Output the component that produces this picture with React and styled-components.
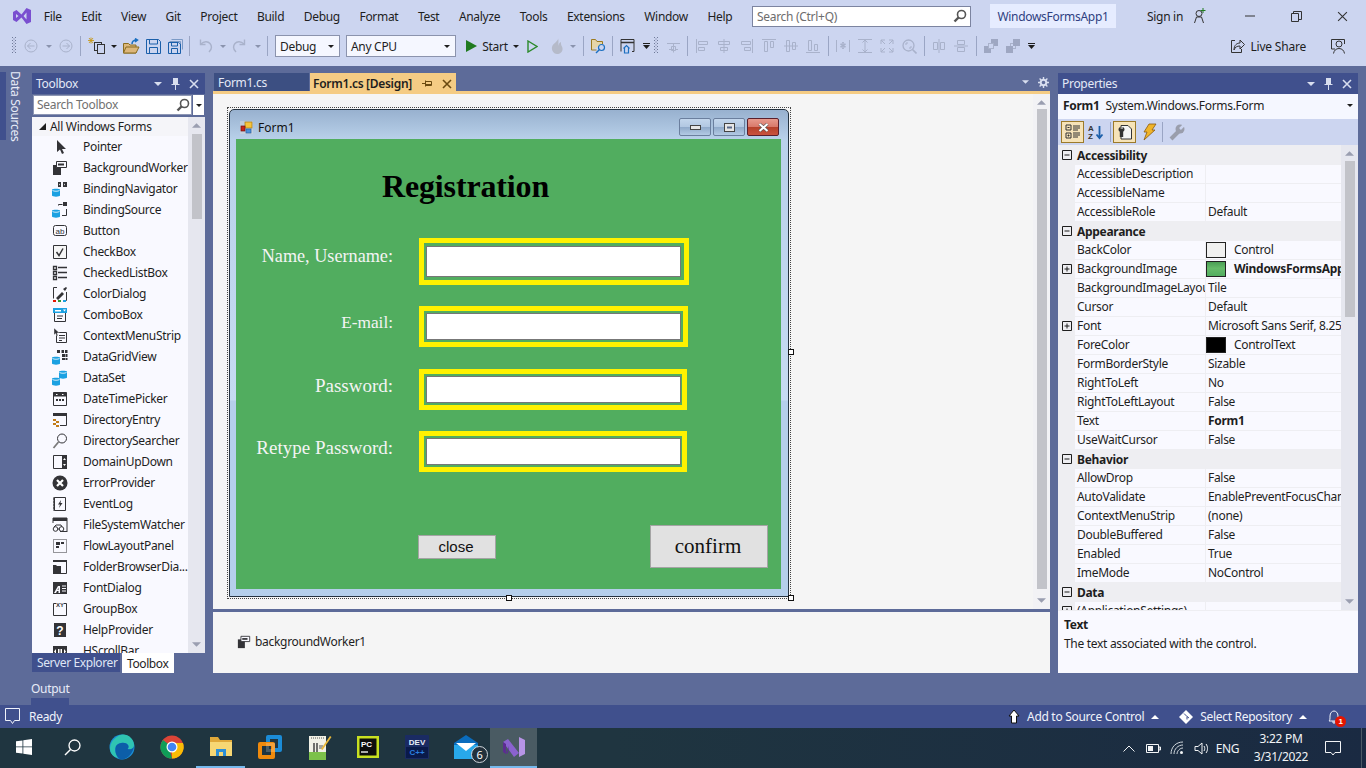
import React from 'react';
import styled, { createGlobalStyle } from 'styled-components';

const UI = '"Noto Sans", "Open Sans", sans-serif';
const SERIF = '"Liberation Serif", serif';

const GlobalStyle = createGlobalStyle`
  html, body { margin: 0; padding: 0; background: #5d6b99; }
  body { width: 1366px; height: 768px; overflow: hidden; font-family: ${UI}; font-size: 12px; letter-spacing: -0.3px; color: #1e1e1e; }
  * { box-sizing: border-box; }
  svg { display: block; flex-shrink: 0; }
  svg text { letter-spacing: 0; }
`;

const Svg = ({ s = 16, w, h, vb = '0 0 16 16', children, ...rest }) => (
  <svg width={w || s} height={h || s} viewBox={vb} {...rest}>{children}</svg>
);

const Tri = ({ color = '#d8deef', w = 7, h = 4, down = true }) => (
  <Svg w={w} h={h} vb="0 0 8 4"><path d={down ? 'M0 0h8L4 4z' : 'M0 4h8L4 0z'} fill={color} /></Svg>
);
const Cross = ({ color = '#d8deef', s = 10, sw = 1.6 }) => (
  <Svg s={s} vb="0 0 10 10"><path d="M1 1l8 8M9 1l-8 8" stroke={color} strokeWidth={sw} fill="none" /></Svg>
);
const Pin = ({ color = '#d8deef' }) => (
  <Svg w={9} h={13} vb="0 0 9 13"><path d="M2 1h5v6h1.500v1h-8V7H2zM4 8h1v5H4z" fill={color} /></Svg>
);
const Magnifier = ({ color = '#555', s = 14 }) => (
  <Svg s={s} vb="0 0 14 14"><circle cx="8.500" cy="5.500" r="4" fill="none" stroke={color} strokeWidth="1.600" /><path d="M5.500 8.500L1.500 12.500" stroke={color} strokeWidth="2.400" /></Svg>
);

const DIM = '#a9b2cb';
const Line = ({ d, c = DIM, sw = 1 }) => <path d={d} fill="none" stroke={c} strokeWidth={sw} />;

// toolbar drawings, each on a 16 box
const toolIcons = {
  grip: <Svg w={5} h={18} vb="0 0 5 18"><path d="M0 0h1v1H0zM3 0h1v1H3zM0 3h1v1H0zM3 3h1v1H3zM0 6h1v1H0zM3 6h1v1H3zM0 9h1v1H0zM3 9h1v1H3zM0 12h1v1H0zM3 12h1v1H3zM0 15h1v1H0zM3 15h1v1H3zM1.500 1.500h1v1h-1zM1.500 4.500h1v1h-1zM1.500 7.500h1v1h-1zM1.500 10.500h1v1h-1zM1.500 13.500h1v1h-1z" fill="#6f7a99" /></Svg>,
  back: <Svg s={14} vb="0 0 14 14"><circle cx="7" cy="7" r="6" fill="none" stroke={DIM} /><Line d="M10.500 7h-7M6.500 4l-3 3 3 3" /></Svg>,
  forward: <Svg s={14} vb="0 0 14 14"><circle cx="7" cy="7" r="6" fill="none" stroke={DIM} /><Line d="M3.500 7h7M7.500 4l3 3-3 3" /></Svg>,
  arrowDim: <Tri color="#8a93ad" w={6} h={3} />,
  arrow: <Tri color="#1e1e1e" w={6} h={3} />,
  sep: <Svg w={1} h={20} vb="0 0 1 20"><rect width="1" height="20" fill="#9aa5c4" /></Svg>,
  newProject: <Svg s={18} vb="0 0 18 18"><path d="M3 .500v6M0 3.500h6M1 1l4 5M5 1L1 6" stroke="#c79a1e" strokeWidth=".9" fill="none" /><rect x="6.500" y="5.500" width="7" height="8" fill="#ccd5f0" stroke="#333" /><rect x="9.500" y="7.500" width="7" height="9" fill="#ccd5f0" stroke="#333" /></Svg>,
  open: <Svg w={17} h={16} vb="0 0 17 16"><path d="M.500 15V5.500h5l1.500 1.500h6v8z" fill="#dcb67a" stroke="#8a6d1f" /><path d="M.500 15l2.500-6h13l-3 6z" fill="#dcb67a" stroke="#8a6d1f" /><path d="M9 6c0-3 2-4 5-4M12 .500l2.500 1.500L12 4" stroke="#1a6fc0" strokeWidth="1.500" fill="none" /></Svg>,
  save: <Svg s={15} vb="0 0 15 15"><path d="M.500.500h12l2 2v12H.500z" fill="#ccd5f0" stroke="#1b5faa" strokeWidth="1" /><path d="M3.500.500v4.500h8V.500M3.500 14.500V8.500h8v6" fill="none" stroke="#1b5faa" /></Svg>,
  saveAll: <Svg s={15} vb="0 0 15 15"><path d="M3.500.500h11v10M1.500 2.500h11v10" fill="none" stroke="#7b9ac6" /><path d="M.500 3.500h10l2 1.500v9.500H.500z" fill="#ccd5f0" stroke="#1b5faa" /><path d="M3.500 3.500v3.500h6v-3.500M3.500 14.500v-5h6v5" fill="none" stroke="#1b5faa" /></Svg>,
  undo: <Svg s={16}><Line d="M12 14c3-3 3-6 1-8.500S7 3 4 6" sw={1.400} /><Line d="M3.500 1.500v5h5" sw={1.400} /></Svg>,
  redo: <Svg s={16}><Line d="M4 14C1 11 1 8 3 5.500S9 3 12 6" sw={1.400} /><Line d="M12.500 1.500v5h-5" sw={1.400} /></Svg>,
  play: <Svg w={11} h={12} vb="0 0 11 12"><path d="M0 0l11 6-11 6z" fill="#1f7a1f" /></Svg>,
  playOutline: <Svg w={11} h={13} vb="0 0 11 13"><path d="M1 1l9 5.500-9 5.500z" fill="none" stroke="#2b8a2b" strokeWidth="1.400" /></Svg>,
  flame: <Svg s={16}><path d="M9 0c1 3-5 5-6 9-.8 3.500 2 7 5 7s6-2 5.500-6c-.3-2-2-3-1.500-6-2 1-2.500 2.500-2.500 4C9 6 10 3 9 0z" fill="#b5bac9" /></Svg>,
  findFolder: <Svg s={16}><path d="M.500 12V1.500h4l1.500 2h5.500V6" fill="#e6d5a8" stroke="#9c7a1f" /><path d="M.500 12h5" stroke="#9c7a1f" /><circle cx="10.500" cy="9.500" r="3" fill="none" stroke="#1b6fc0" strokeWidth="1.200" /><path d="M8.500 11.500l-3.500 3.500" stroke="#1b6fc0" strokeWidth="1.400" /></Svg>,
  winHome: <Svg s={15} vb="0 0 15 15"><path d="M1 12.500V.500h13v12h-2" fill="none" stroke="#333" /><path d="M1 3.500h13" stroke="#333" strokeWidth="1.500" /><path d="M3.500 9.500l3-3 3 3M4.500 9v5h4V9" fill="none" stroke="#1b6fc0" strokeWidth="1.200" /></Svg>,
  overflow: <Svg w={7} h={6} vb="0 0 7 6"><path d="M0 0h7v1H0zM0 2h7L3.500 6z" fill="#1e1e1e" /></Svg>,
  spacing: <Svg s={13} vb="0 0 13 13"><Line d="M0 3.500h13M2 9.500h4M8 9.500h3M6.500 3.500v9M4.500 6.500h4v4h-4z" /></Svg>,
  alignL: <Svg s={14} vb="0 0 14 14"><Line d="M.500 0v14M2.500 2.500h9v3h-9zM2.500 8.500h6v3h-6z" /></Svg>,
  alignC: <Svg s={14} vb="0 0 14 14"><Line d="M7 0v14M1.500 2.500h11v3h-11zM3.500 8.500h7v3h-7z" /></Svg>,
  alignR: <Svg s={14} vb="0 0 14 14"><Line d="M13.500 0v14M2.500 2.500h9v3h-9zM5.500 8.500h6v3h-6z" /></Svg>,
  alignT: <Svg s={14} vb="0 0 14 14"><Line d="M0 .500h14M2.500 2.500h3v10h-3zM8.500 2.500h3v6h-3z" /></Svg>,
  alignM: <Svg s={14} vb="0 0 14 14"><Line d="M0 7h14M2.500 1.500h3v11h-3zM8.500 3.500h3v7h-3z" /></Svg>,
  alignB: <Svg s={14} vb="0 0 14 14"><Line d="M0 13.500h14M2.500 1.500h3v10h-3zM8.500 5.500h3v6h-3z" /></Svg>,
  sizeW: <Svg s={14} vb="0 0 14 14"><Line d="M.500 1v12M13.500 1v12" /><path d="M5 4l1.500 1.500L6 3h2l-.5 2.500L9 4l1 1.700-2 .8 2 .8L9 9 7.500 7.500 8 10H6l.5-2.500L5 9 4 7.300l2-.8-2-.8z" fill={DIM} /></Svg>,
  sizeH: <Svg s={14} vb="0 0 14 14"><Line d="M0 .500h14M0 13.500h14M7 1v12M4.500 3.500L7 1l2.500 2.500M4.500 10.500L7 13l2.500-2.500" /></Svg>,
  sizeBoth: <Svg s={14} vb="0 0 14 14"><Line d="M1 5V1h4M9 1h4v4M13 9v4H9M5 13H1V9M1 1l4 4M13 1L9 5M13 13L9 9M1 13l4-4" /></Svg>,
  zoomFit: <Svg s={15} vb="0 0 15 15"><circle cx="6.500" cy="6.500" r="5.500" fill="none" stroke={DIM} strokeWidth="1.300" /><Line d="M10.500 10.500l4 4" sw={1.600} /><Line d="M4 6V4h2M9 7v2H7" /></Svg>,
  centerH: <Svg s={14} vb="0 0 14 14"><Line d="M7 0v14M1.500 3.500h4v7h-4zM8.500 3.500h4v7h-4z" /></Svg>,
  centerV: <Svg s={14} vb="0 0 14 14"><Line d="M0 7h14M3.500 1.500h7v4h-7zM3.500 8.500h7v4h-7z" /></Svg>,
  front: <Svg s={14} vb="0 0 14 14"><rect x="0" y="7" width="7" height="7" fill="#9ea7c2" /><rect x="7" y="0" width="7" height="7" fill="#9ea7c2" /><rect x="4.500" y="4.500" width="5" height="5" fill="#ccd5f0" stroke={DIM} /></Svg>,
  back2: <Svg s={14} vb="0 0 14 14"><rect x="4.500" y="4.500" width="5" height="5" fill="none" stroke={DIM} /><rect x="0" y="7" width="7" height="7" fill="#9ea7c2" /><rect x="7" y="0" width="7" height="7" fill="#9ea7c2" /></Svg>,
};

const tools = [
  [12, 5, 'grip'], [24, 14, 'back'], [46, 6, 'arrowDim'], [59, 14, 'forward'], [80, 1, 'sep'],
  [88, 18, 'newProject'], [111, 6, 'arrow'], [123, 17, 'open'], [146, 15, 'save'], [168, 15, 'saveAll'], [189, 1, 'sep'],
  [197, 16, 'undo'], [220, 6, 'arrowDim'], [232, 16, 'redo'], [255, 6, 'arrowDim'], [267, 1, 'sep'],
  [275, 65, 'debug'], [346, 110, 'cpu'], [466, 11, 'play'], [483, 24, 'start'], [513, 6, 'arrow'], [527, 11, 'playOutline'],
  [549, 16, 'flame'], [570, 6, 'arrowDim'], [583, 1, 'sep'], [591, 16, 'findFolder'], [612, 1, 'sep'],
  [620, 15, 'winHome'], [643, 7, 'overflow'], [654, 5, 'grip'], [667, 13, 'spacing'], [687, 1, 'sep'],
  [696, 14, 'alignL'], [717, 14, 'alignC'], [739, 14, 'alignR'], [762, 14, 'alignT'], [784, 14, 'alignM'], [806, 14, 'alignB'], [828, 1, 'sep'],
  [836, 14, 'sizeW'], [858, 14, 'sizeH'], [880, 14, 'sizeBoth'], [902, 15, 'zoomFit'], [924, 1, 'sep'],
  [932, 14, 'centerH'], [954, 14, 'centerV'], [976, 1, 'sep'], [984, 14, 'front'], [1006, 14, 'back2'], [1028, 7, 'overflow'],
];

const Dark = '#333337';
const Blue = '#1ba1e2';
const Cyl = ({ x = 0, y = 7 }) => (
  <g transform={`translate(${x} ${y})`}>
    <path d="M0 1.500C0 .5 8 .5 8 1.500V7.500C8 9 0 9 0 7.500z" fill={Blue} />
    <path d="M.5 2.500c1.500 1 5.500 1 7 0" stroke="#fff" strokeWidth=".8" fill="none" />
  </g>
);

const toolboxIcons = {
  pointer: <path d="M5 1v12l3-2.500L10 15l2-1-2-4h4z" fill={Dark} />,
  worker: <><path d="M1 5h8v10H1z" fill={Dark} /><path d="M4.500 1.500h10v6h-10z" fill="#f9f9ff" stroke={Dark} /><path d="M6 3.500h6v2H6z" fill={Dark} /></>,
  bindNav: <><Cyl /><path d="M6 1h3v5H6zM11 1h4v5h-4z" fill={Dark} /><path d="M13 2.500v2l-1-1z" fill="#fff" /><path d="M7 2.500v2l1-1z" fill="#fff" /></>,
  bindSrc: <><Cyl /><path d="M6.500 3.500V2.500h4M14.500 7v6.500H10" stroke={Dark} fill="none" /><path d="M11 0h4v4h-4z" fill={Dark} /></>,
  button: <><rect x="1.500" y="2.500" width="13" height="10" rx="2" fill="none" stroke={Dark} /><text x="8" y="10.500" fontSize="8" textAnchor="middle" fontFamily="Liberation Sans" fill={Dark}>ab</text></>,
  checkBox: <><path d="M1.500 1.500h13v13h-13z" fill="#f6f6f6" stroke={Dark} /><path d="M4.500 8l2.500 3.500 4-7" stroke={Dark} strokeWidth="1.500" fill="none" /></>,
  checkedList: <path d="M1.500 1.500h3v3h-3zM1.500 6.500h3v3h-3zM1.500 11.500h3v3h-3zM6 2.500h9M6 7.500h9M6 12.500h9" stroke={Dark} fill="none" strokeWidth="1.300" />,
  color: <><path d="M5 1.500H1.500v11M11 14.500h3.500V6" stroke={Dark} fill="none" /><path d="M4 12l6-6 2 2-6 6zM11 3l2 2 2-3-1-1z" fill={Dark} /><path d="M1 14h3v2H1z" fill="#e51400" /><path d="M6 14h3v2H6z" fill="#339933" /><path d="M11 14h3v2h-3z" fill={Blue} /></>,
  combo: <><path d="M1 1h14v5H1z" fill={Blue} /><path d="M3 3h6v1.500H3zM11 2.500h3l-1.500 2z" fill="#fff" /><path d="M2.500 6v8.500h11V6M5 9h6M5 11.500h5" stroke={Dark} fill="none" /></>,
  context: <><path d="M4.500 4.500h10v10h-10z" fill="none" stroke={Dark} /><path d="M7 7.500h6M7 10h6M7 12.500h3" stroke={Dark} /><path d="M2 0v7l1.500-1.500L5 8l1-.5L5 5h2.500z" fill={Dark} stroke="#f9f9ff" strokeWidth=".4" /></>,
  grid: <><Cyl /><path d="M5 1h3v3H5zM9.500 1h2.500v3H9.500zM13 1h2.500v3H13zM10 5h3v3h-3zM13.500 5h2v3h-2zM10 9h3v2h-3zM13.500 9h2v2h-2z" fill={Dark} /></>,
  dataSet: <><Cyl /><g transform="translate(7 -7)"><path d="M0 8.500C0 7.500 8 7.500 8 8.500V14.500C8 16 0 16 0 14.500z" fill={Blue} /><path d="M.5 9.500c1.500 1 5.500 1 7 0" stroke="#fff" strokeWidth=".8" fill="none" /></g></>,
  date: <><path d="M1.500 1.500h13v13h-13z" fill="none" stroke={Dark} /><path d="M1.500 1.500h13v4h-13z" fill={Dark} /><path d="M4 8h2v2H4zM7 8h2v2H7zM10 8h2v2h-2z" fill={Dark} /><path d="M4 3h1.500v1H4zM10 3h1.500v1H10z" fill="#fff" /></>,
  dirEntry: <><path d="M1.500 1.500h13v12H8" stroke={Dark} fill="none" /><path d="M1 1h14v3H1z" fill={Dark} /><path d="M1 7h3v2H1zM4 9h3v2H4zM1 11h3v2H1zM4 13h3v2H4z" fill="#c27d1a" /></>,
  dirSearch: <><circle cx="10" cy="5.500" r="4.500" fill="none" stroke={Dark} /><path d="M6.500 9L1.500 15" stroke="#7a7a7a" strokeWidth="1.800" /></>,
  updown: <><path d="M1.500 1.500h13v13h-13z" fill="none" stroke={Dark} /><path d="M10 1h5v14h-5z" fill={Dark} /><path d="M11 6l1.500-2L14 6zM11 10l1.500 2 1.500-2z" fill="#fff" /></>,
  error: <><circle cx="8" cy="8" r="7.500" fill={Dark} /><path d="M5 5l6 6M11 5l-6 6" stroke="#fff" strokeWidth="2.200" /></>,
  eventLog: <><path d="M2.500 1.500h11v13h-11z" fill="none" stroke={Dark} /><path d="M2 1v14M1 3h2M1 6h2M1 9h2M1 12h2" stroke={Dark} /><path d="M9 4L6 8.500h2L7 12l3.500-5h-2z" fill={Dark} /></>,
  fsw: <><path d="M1 1h14v14M1 1v5M8 14.500h7" stroke={Dark} fill="none" /><path d="M1 1h14v3H1z" fill={Dark} /><circle cx="3.500" cy="12" r="2.300" fill="none" stroke={Dark} /><circle cx="9.500" cy="12" r="2.300" fill="none" stroke={Dark} /><path d="M5.500 12h2M4 8h5l1 2M4 8L2 10" stroke={Dark} fill="none" /></>,
  flow: <><rect x="1.500" y="1.500" width="13" height="13" fill="none" stroke={Dark} strokeDasharray="1 1" /><path d="M4 4h4v3H4zM9 4h3v2H9zM4 8h3v2H4z" fill={Dark} /></>,
  folderDlg: <><path d="M1.500 1.500h13v13H8" stroke={Dark} fill="none" /><path d="M1 1h14v2H1zM1 6h3l1 1h4v8H1z" fill={Dark} /></>,
  font: <><path d="M1 2h14v12H1z" fill={Dark} /><path d="M2 13L6 6h2v7h-1.500v-2H5l-1 2zM6.500 10V7.500L5.500 10z" fill="#f9f9ff" /><path d="M10 6h4M10 8.500h4M10 11h4" stroke="#f9f9ff" /></>,
  group: <><path d="M4 2.500H1.500v12h13v-12H12" stroke={Dark} fill="none" /><text x="8" y="5.500" fontSize="6" textAnchor="middle" fontFamily="Liberation Sans" fontWeight="bold" fill={Dark}>XY</text></>,
  help: <><path d="M2 1h12v14H2z" fill={Dark} /><text x="8" y="12.500" fontSize="12" textAnchor="middle" fontFamily="Liberation Sans" fontWeight="bold" fill="#fff">?</text></>,
  hscroll: <><path d="M1 3h14v11H1z" fill={Dark} /><path d="M4 6v5L2 8.500zM12 6v5l2-2.500zM6 6h1.500v5H6zM8.500 6H10v5H8.500z" fill="#fff" /></>,
};

const toolboxItems = [
  ['Pointer', 'pointer'], ['BackgroundWorker', 'worker'], ['BindingNavigator', 'bindNav'], ['BindingSource', 'bindSrc'],
  ['Button', 'button'], ['CheckBox', 'checkBox'], ['CheckedListBox', 'checkedList'], ['ColorDialog', 'color'],
  ['ComboBox', 'combo'], ['ContextMenuStrip', 'context'], ['DataGridView', 'grid'], ['DataSet', 'dataSet'],
  ['DateTimePicker', 'date'], ['DirectoryEntry', 'dirEntry'], ['DirectorySearcher', 'dirSearch'], ['DomainUpDown', 'updown'],
  ['ErrorProvider', 'error'], ['EventLog', 'eventLog'], ['FileSystemWatcher', 'fsw'], ['FlowLayoutPanel', 'flow'],
  ['FolderBrowserDia...', 'folderDlg'], ['FontDialog', 'font'], ['GroupBox', 'group'], ['HelpProvider', 'help'], ['HScrollBar', 'hscroll'],
];

const menus = ['File', 'Edit', 'View', 'Git', 'Project', 'Build', 'Debug', 'Format', 'Test', 'Analyze', 'Tools', 'Extensions', 'Window', 'Help'];

const propGroups = [
  ['Accessibility', [
    { n: 'AccessibleDescription' }, { n: 'AccessibleName' }, { n: 'AccessibleRole', v: 'Default' },
  ]],
  ['Appearance', [
    { n: 'BackColor', v: 'Control', swatch: '#f0f0f0' },
    { n: 'BackgroundImage', v: 'WindowsFormsApp1.Properties', swatch: 'linear-gradient(180deg, #4a9e55 0, #66bb6a 45%, #52ae60 100%)', plus: true, bold: true },
    { n: 'BackgroundImageLayout', v: 'Tile' }, { n: 'Cursor', v: 'Default' },
    { n: 'Font', v: 'Microsoft Sans Serif, 8.25pt', plus: true },
    { n: 'ForeColor', v: 'ControlText', swatch: '#000' },
    { n: 'FormBorderStyle', v: 'Sizable' }, { n: 'RightToLeft', v: 'No' }, { n: 'RightToLeftLayout', v: 'False' },
    { n: 'Text', v: 'Form1', bold: true }, { n: 'UseWaitCursor', v: 'False' },
  ]],
  ['Behavior', [
    { n: 'AllowDrop', v: 'False' }, { n: 'AutoValidate', v: 'EnablePreventFocusChange' }, { n: 'ContextMenuStrip', v: '(none)' },
    { n: 'DoubleBuffered', v: 'False' }, { n: 'Enabled', v: 'True' }, { n: 'ImeMode', v: 'NoControl' },
  ]],
  ['Data', [{ n: '(ApplicationSettings)', plus: true }]],
];

const fields = [
  { label: 'Name, Username:', size: 18.2, lift: 11, w: 270, h: 47, gapR: 3, gapV: 3, after: 21 },
  { label: 'E-mail:', size: 17.3, lift: 8, w: 269, h: 41, gapR: 2, gapV: 2, after: 22 },
  { label: 'Password:', size: 19, lift: 7, w: 268, h: 41, gapR: 1, gapV: 2, after: 21 },
  { label: 'Retype Password:', size: 19, lift: 7, w: 268, h: 41, gapR: 1, gapV: 2, after: 53 },
];

const Shell = styled.div`
  width: 1366px;
  height: 768px;
  display: flex;
  flex-direction: column;
  overflow: hidden;
`;

const TopChrome = styled.header`
  height: 66px;
  background: #ccd5f0;
  flex-shrink: 0;
`;

const MenuRow = styled.div`
  height: 32px;
  display: flex;
  align-items: center;
  padding-left: 12px;
`;

const MenuBar = styled.nav`
  width: 720px;
  display: flex;
  padding-left: 2px;
`;

const MenuItem = styled.span`
  padding: 0 9.75px;
  color: #1e1e1e;
`;

const QuickSearch = styled.div`
  width: 219px;
  height: 21px;
  background: #fff;
  border: 1px solid #7c84a0;
  display: flex;
  align-items: center;
  justify-content: space-between;
  padding: 0 3px 0 4px;
  color: #6d6d6d;
`;

const SolutionChip = styled.div`
  width: 126px;
  height: 24px;
  margin-left: 19px;
  background: #e6ecff;
  color: #2f3f7f;
  display: flex;
  align-items: center;
  justify-content: center;
`;

const SignIn = styled.div`
  margin-left: 31px;
  display: flex;
  align-items: center;
  gap: 8px;
`;

const WindowButtons = styled.div`
  margin-left: auto;
  display: flex;
  padding-right: 1px;
`;

const WindowButton = styled.div`
  width: 46px;
  height: 30px;
  display: flex;
  align-items: center;
  justify-content: center;
`;

const ToolRow = styled.div`
  height: 28px;
  display: flex;
  align-items: center;
`;

const Tool = styled.div`
  width: ${(p) => p.$w}px;
  margin-left: ${(p) => p.$gap}px;
  flex-shrink: 0;
  display: flex;
  justify-content: center;
  white-space: nowrap;
`;

const Combo = styled.div`
  width: 100%;
  height: 22px;
  background: #f5f7ff;
  border: 1px solid #8b93ad;
  display: flex;
  align-items: center;
  justify-content: space-between;
  padding: 0 5px 0 4px;
`;

const LiveShare = styled.div`
  margin-left: auto;
  display: flex;
  align-items: center;
  gap: 5px;
  padding-right: 20px;
  letter-spacing: -0.2px;
`;

const Feedback = styled.div`
  margin-left: 19px;
`;

const Workspace = styled.main`
  height: 639px;
  background: #5d6b99;
  flex-shrink: 0;
  padding-top: 7px;
`;

const Panels = styled.div`
  height: 600px;
  display: flex;
`;

const SideStrip = styled.div`
  width: 32px;
  flex-shrink: 0;
`;

const DataTab = styled.div`
  width: 26px;
  height: 68px;
  margin-top: -1px;
  border-left: 6px solid #40508d;
  color: #e8ecf8;
  writing-mode: vertical-rl;
  line-height: 19px;
  white-space: nowrap;
  display: flex;
  justify-content: center;
  align-items: flex-end;
`;

const ToolWindow = styled.section`
  width: ${(p) => p.$w}px;
  margin-left: ${(p) => p.$ml || 0}px;
  flex-shrink: 0;
  display: flex;
  flex-direction: column;
`;

const PanelHead = styled.div`
  height: 21px;
  background: #40508d;
  color: #e4e9f7;
  display: flex;
  align-items: center;
  padding: 0 6px 0 4px;
  flex-shrink: 0;
`;

const HeadTitle = styled.span`
  flex: 1;
`;

const HeadIcons = styled.div`
  display: flex;
  align-items: center;
  gap: 9px;
`;

const ToolboxSearch = styled.div`
  height: 23px;
  display: flex;
  background: #5d6b99;
  padding: 1px 1px 2px;
  gap: 1px;
`;

const SearchField = styled.div`
  width: 159px;
  background: #fff;
  border: 1px solid #8d96b4;
  color: #717171;
  display: flex;
  align-items: center;
  justify-content: space-between;
  padding: 0 1px 1px 3px;
`;

const SearchDrop = styled.div`
  flex: 1;
  background: #fff;
  display: flex;
  align-items: center;
  justify-content: center;
`;

const ToolboxBody = styled.div`
  height: 536px;
  display: flex;
  background: #f9f9ff;
`;

const ToolboxList = styled.div`
  flex: 1;
  overflow: hidden;
`;

const ToolboxGroup = styled.div`
  height: 19px;
  background: #f5f5f9;
  display: flex;
  align-items: center;
  padding-left: 7px;
  gap: 4px;
`;

const ToolboxItem = styled.div`
  height: 21px;
  display: flex;
  align-items: center;
  padding-left: 20px;
  white-space: nowrap;
  gap: 15px;
`;

const ScrollTrack = styled.div`
  width: ${(p) => p.$w || 17}px;
  background: ${(p) => p.$bg || '#e6e7ef'};
  flex-shrink: 0;
  display: flex;
  flex-direction: column;
  align-items: center;
  padding: 6px 0;
`;

const ScrollThumb = styled.div`
  width: 10px;
  height: ${(p) => p.$h}px;
  margin-top: ${(p) => p.$top}px;
  margin-bottom: auto;
  background: #c2c3c9;
`;

const BottomTabs = styled.div`
  height: 20px;
  display: flex;
  background: #5d6b99;
  gap: 2px;
`;

const BottomTab = styled.div`
  width: ${(p) => p.$w}px;
  padding-left: 5px;
  display: flex;
  align-items: center;
  background: ${(p) => (p.$active ? '#fff' : '#40508d')};
  color: ${(p) => (p.$active ? '#1e1e1e' : '#dfe5f5')};
  margin-bottom: ${(p) => (p.$active ? 0 : 1)}px;
  white-space: nowrap;
  letter-spacing: -0.4px;
`;

const DocTabs = styled.div`
  height: 21px;
  display: flex;
  align-items: stretch;
  border-bottom: 3px solid #f5cc84;
  padding-left: 1px;
  flex-shrink: 0;
`;

const DocTab = styled.div`
  width: 95px;
  background: #3c4f82;
  color: #e4e9f7;
  display: flex;
  align-items: center;
  padding-left: 4px;
  margin-right: 1px;
`;

const ActiveDocTab = styled.div`
  width: 146px;
  background: #f5cc84;
  color: #1e1e1e;
  font-weight: 600;
  display: flex;
  align-items: center;
  padding-left: 3px;
  white-space: nowrap;
  height: 21px;
`;

const DocTabIcons = styled.div`
  margin-left: auto;
  display: flex;
  align-items: center;
  gap: 9px;
  padding-right: 4px;
`;

const DocMenu = styled.div`
  margin-left: auto;
  display: flex;
  align-items: center;
  gap: 9px;
  padding-right: 1px;
`;

const Editor = styled.div`
  height: 515px;
  display: flex;
  background: #f5f5f5;
  flex-shrink: 0;
`;

const Canvas = styled.div`
  flex: 1;
  padding: 13px 0 0 14px;
`;

const Selection = styled.div`
  position: relative;
  width: 564px;
  height: 492px;
  border: 1px dotted #444;
  padding: 1px;
`;

const Handle = styled.span`
  position: absolute;
  width: 6px;
  height: 6px;
  background: #fff;
  border: 1px solid #111;
  left: ${(p) => p.$x}px;
  top: ${(p) => p.$y}px;
`;

const FormWindow = styled.div`
  width: 560px;
  height: 488px;
  border: 1px solid #25323f;
  border-radius: 5px 5px 0 0;
  background: linear-gradient(180deg, #98b1cf 0, #b9d1ea 30px, #c6dbf2 290px, #b5cfeb 291px);
  display: flex;
  flex-direction: column;
  padding: 0 7px 7px 6px;
`;

const FormTitle = styled.div`
  height: 29px;
  display: flex;
  align-items: center;
  margin-left: -6px;
  margin-right: -7px;
  padding: 5px 9px 0 10px;
  flex-shrink: 0;
`;

const FormName = styled.span`
  margin-left: 5px;
  color: #111;
  letter-spacing: 0;
`;

const CaptionButtons = styled.div`
  margin-left: auto;
  align-self: flex-start;
  margin-top: 3px;
  display: flex;
  gap: 2px;
`;

const CaptionButton = styled.div`
  width: 32px;
  height: 18px;
  border: 1px solid ${(p) => (p.$close ? '#5a1f2c' : '#6b7f9e')};
  border-radius: 2px;
  background: ${(p) => (p.$close
    ? 'linear-gradient(180deg, #e79a8d 0, #d9796b 48%, #b5402a 50%, #c9533e 100%)'
    : 'linear-gradient(180deg, #c3d6ec 0, #b2c8e2 48%, #8fa9c9 50%, #b3cae4 100%)')};
  display: flex;
  align-items: center;
  justify-content: center;
`;

const Client = styled.div`
  width: 545px;
  height: 450px;
  background: #51ad5f;
  padding-top: 27px;
`;

const Heading = styled.h1`
  margin: 0 0 32px 146px;
  font: bold 32px/40px ${SERIF};
  letter-spacing: -0.15px;
  color: #000;
`;

const FieldRow = styled.div`
  display: flex;
  align-items: center;
  margin-bottom: ${(p) => p.$after}px;
`;

const FieldLabel = styled.label`
  width: 157px;
  text-align: right;
  padding-bottom: ${(p) => p.$lift}px;
  font: ${(p) => p.$size}px/22px ${SERIF};
  letter-spacing: 0;
  color: #f4f4f4;
  white-space: nowrap;
`;

const FieldFrame = styled.div`
  width: ${(p) => p.$w}px;
  height: ${(p) => p.$h}px;
  margin-left: 26px;
  border: 5px solid #fff200;
  padding: ${(p) => p.$gapV}px ${(p) => p.$gapR}px ${(p) => p.$gapV}px 2px;
`;

const FieldInput = styled.div`
  height: 100%;
  background: #fff;
  border: 1px solid #777;
`;

const FormActions = styled.div`
  display: flex;
  align-items: flex-start;
  padding-left: 182px;
`;

const FormButton = styled.div`
  width: ${(p) => p.$w}px;
  height: ${(p) => p.$h}px;
  margin-left: ${(p) => p.$ml || 0}px;
  margin-top: ${(p) => p.$mt || 0}px;
  background: #e1e1e1;
  border: 1px solid #a4a4a4;
  display: flex;
  align-items: center;
  justify-content: center;
  color: #111;
`;

const CloseLabel = styled.span`
  font: 15px "Liberation Sans", sans-serif;
  letter-spacing: 0;
  padding: 0 2px 1px 0;
`;

const ConfirmLabel = styled.span`
  font: 21px ${SERIF};
  letter-spacing: 0;
  padding-right: 2px;
`;

const Divider = styled.div`
  height: 3px;
  flex-shrink: 0;
`;

const Tray = styled.div`
  height: 61px;
  background: #f5f5f5;
  display: flex;
  align-items: center;
  padding: 0 0 2px 24px;
  gap: 4px;
`;

const ObjectBar = styled.div`
  height: 25px;
  background: #f5f7ff;
  display: flex;
  align-items: center;
  padding: 0 5px 2px;
  gap: 6px;
  flex-shrink: 0;
`;

const ObjectName = styled.b`
  font-weight: 700;
`;

const ObjectType = styled.span`
  flex: 1;
`;

const PropToolbar = styled.div`
  height: 26px;
  background: #ccd5f0;
  display: flex;
  align-items: center;
  padding-left: 3px;
  flex-shrink: 0;
`;

const PropTool = styled.div`
  width: 23px;
  height: 22px;
  display: flex;
  align-items: center;
  justify-content: center;
  background: ${(p) => (p.$on ? '#f6e3b8' : 'transparent')};
  border: 1px solid ${(p) => (p.$on ? '#9c7a2a' : 'transparent')};
`;

const PropSep = styled.div`
  width: 1px;
  height: 20px;
  margin: 0 2px 0 3px;
  background: #9aa5c4;
`;

const PropBody = styled.div`
  height: 465px;
  display: flex;
  overflow: hidden;
  background: #eeeef2;
`;

const PropGrid = styled.div`
  width: 282px;
  overflow: hidden;
  padding-top: 1px;
  margin-left: 1px;
`;

const CategoryRow = styled.div`
  height: 19px;
  display: flex;
  align-items: center;
  padding: 0 0 1px 3px;
  gap: 4px;
  font-weight: 700;
  background: #eeeef2;
`;

const PropRow = styled.div`
  height: 19px;
  display: flex;
  position: relative;
  padding-left: 16px;
  background: #eeeef2;
`;

const PropName = styled.div`
  width: 130px;
  background: #f9f9ff;
  border-bottom: 1px solid #eeeef2;
  padding-left: 2px;
  line-height: 18px;
  overflow: hidden;
  white-space: nowrap;
`;

const PropValue = styled.div`
  flex: 1;
  min-width: 0;
  margin-left: 1px;
  background: #f9f9ff;
  border-bottom: 1px solid #eeeef2;
  padding-left: ${(p) => (p.$swatch ? 0 : 2)}px;
  line-height: 18px;
  overflow: hidden;
  white-space: nowrap;
  display: flex;
  align-items: center;
  font-weight: ${(p) => (p.$bold ? 700 : 400)};
`;

const Swatch = styled.span`
  width: 20px;
  height: 16px;
  flex-shrink: 0;
  margin-right: 8px;
  background: ${(p) => p.$c};
  border: 1px solid #222;
`;

const Expander = styled.span`
  position: absolute;
  left: 3px;
  top: 4px;
`;

const DescPanel = styled.div`
  height: 63px;
  background: #f9f9ff;
  padding: 5px 6px;
  border-top: 1px solid #eeeef2;
  flex-shrink: 0;
`;

const DescTitle = styled.div`
  font-weight: 700;
  line-height: 17px;
`;

const DescText = styled.div`
  line-height: 17px;
  margin-top: 2px;
`;

const OutputRow = styled.div`
  height: 32px;
  padding: 6px 0 0 31px;
`;

const OutputTab = styled.div`
  width: 38px;
  color: #e8ecf8;
  line-height: 19px;
  border-bottom: 7px solid #40508d;
`;

const StatusBar = styled.footer`
  height: 23px;
  background: #40508d;
  color: #f0f3fb;
  display: flex;
  align-items: center;
  padding-left: 5px;
  flex-shrink: 0;
`;

const ReadyText = styled.span`
  margin-left: 9px;
`;

const StatusRight = styled.div`
  margin-left: auto;
  display: flex;
  align-items: center;
  padding-right: 25px;
`;

const StatusItem = styled.div`
  display: flex;
  align-items: center;
  gap: 7px;
  margin-left: ${(p) => p.$ml || 0}px;
`;

const Bell = styled.div`
  position: relative;
  margin-left: 20px;
`;

const BellBadge = styled.span`
  position: absolute;
  right: -5px;
  bottom: -3px;
  width: 11px;
  height: 11px;
  border-radius: 50%;
  background: #e51400;
  color: #fff;
  font: bold 8px/11px "Liberation Sans", sans-serif;
  text-align: center;
`;

const Taskbar = styled.div`
  height: 40px;
  background: linear-gradient(90deg, #1f3540 0, #1f3540 45%, #1a2a42 100%);
  display: flex;
  align-items: stretch;
  flex-shrink: 0;
`;

const TaskSlot = styled.div`
  width: ${(p) => p.$w || 49}px;
  position: relative;
  display: flex;
  align-items: center;
  justify-content: center;
  flex-shrink: 0;
  background: ${(p) => (p.$active ? '#4a5b63' : 'transparent')};
  border-bottom: 2px solid ${(p) => (p.$running ? '#76b9ed' : 'transparent')};
`;

const MailBadge = styled.span`
  position: absolute;
  right: 2px;
  bottom: 3px;
  width: 17px;
  height: 17px;
  border-radius: 50%;
  background: #23313c;
  border: 1px solid #cfd6dc;
  color: #fff;
  font-size: 11px;
  line-height: 15px;
  text-align: center;
`;

const SystemTray = styled.div`
  margin-left: auto;
  display: flex;
  align-items: center;
  color: #f2f4f6;
`;

const TrayIcon = styled.div`
  width: ${(p) => p.$w}px;
  display: flex;
  justify-content: center;
`;

const Clock = styled.div`
  width: 78px;
  text-align: center;
  line-height: 18px;
`;

const Notify = styled.div`
  width: 26px;
  margin-right: 15px;
  display: flex;
  justify-content: center;
`;

const ShowDesktop = styled.div`
  width: 5px;
  align-self: stretch;
  border-left: 1px solid #4a5a66;
`;

const VsLogo = () => (
  <Svg s={20} vb="0 0 20 20">
    <path fillRule="evenodd" fill="#7a4fd0" d="M1 6l3.500-2 5 4.500L14.500 2 19 4v12l-4.500 2-5-6.500-5 4.500L1 14zM4 8v4l2.500-2zM14.500 6.500L11.500 10l3 3.500z" />
  </Svg>
);

const renderTool = (name) => {
  if (name === 'debug' || name === 'cpu') {
    return <Combo>{name === 'debug' ? 'Debug' : 'Any CPU'}<Tri color="#1e1e1e" w={6} h={3} /></Combo>;
  }
  if (name === 'start') return <span>Start</span>;
  return toolIcons[name];
};

const Toolbar = () => {
  let x = 0;
  return (
    <ToolRow>
      {tools.map(([left, w, name], i) => {
        const gap = left - x;
        x = left + w;
        return <Tool key={i} $w={w} $gap={gap}>{renderTool(name)}</Tool>;
      })}
      <LiveShare>
        <Svg s={15} vb="0 0 15 15"><path d="M5 1.500H1.500v12h10V10" fill="none" stroke="#333" /><path d="M4 11c0-5 3-7 6-7V1l4.500 4.500L10 10V7c-3 0-5 1-6 4z" fill="#ccd5f0" stroke="#333" /></Svg>
        <span>Live Share</span>
        <Feedback>
          <Svg s={16}><path d="M5 11H1.500V1.500h13V6" fill="none" stroke="#333" /><circle cx="9" cy="6" r="3" fill="#ccd5f0" stroke="#333" /><path d="M3.500 15.500c.5-3 2.500-5 5.500-5s5 2 5.500 5" fill="#ccd5f0" stroke="#333" /></Svg>
        </Feedback>
      </LiveShare>
    </ToolRow>
  );
};

const Box = ({ sign }) => (
  <Svg s={11} vb="0 0 11 11">
    <path d={sign === '+' ? 'M.5.5h9v9h-9zM2.500 5h5M5 2.500v5' : 'M.5.5h9v9h-9zM2.500 5h5'} fill="none" stroke="#1e1e1e" />
  </Svg>
);

const Scrollbar = ({ top, thumb, w, bg }) => (
  <ScrollTrack $w={w} $bg={bg}>
    <Tri color="#9a9eb0" w={9} h={5} down={false} />
    <ScrollThumb $top={top} $h={thumb} />
    <Tri color="#9a9eb0" w={9} h={5} />
  </ScrollTrack>
);

export default function App() {
  return (
    <Shell>
      <GlobalStyle />
      <TopChrome>
        <MenuRow>
          <VsLogo />
          <MenuBar>{menus.map((m) => <MenuItem key={m}>{m}</MenuItem>)}</MenuBar>
          <QuickSearch><span>Search (Ctrl+Q)</span><Magnifier /></QuickSearch>
          <SolutionChip>WindowsFormsApp1</SolutionChip>
          <SignIn>
            <span>Sign in</span>
            <Svg s={16}><circle cx="8" cy="5.500" r="3" fill="none" stroke="#333" /><path d="M3.500 15l2-6h5l2 6" fill="none" stroke="#333" /><path d="M12 0v5M9.500 2.500h5" stroke="#1f7a1f" /></Svg>
          </SignIn>
          <WindowButtons>
            <WindowButton><Svg s={10} vb="0 0 10 10"><path d="M0 5h10" stroke="#333" /></Svg></WindowButton>
            <WindowButton><Svg s={11} vb="0 0 11 11"><path d="M.5 2.500h7v8h-7zM2.500 2.500v-2h8v8h-3" fill="none" stroke="#333" /></Svg></WindowButton>
            <WindowButton><Cross color="#333" s={11} sw={1} /></WindowButton>
          </WindowButtons>
        </MenuRow>
        <Toolbar />
      </TopChrome>

      <Workspace>
        <Panels>
          <SideStrip><DataTab>Data Sources</DataTab></SideStrip>

          <ToolWindow $w={173}>
            <PanelHead>
              <HeadTitle>Toolbox</HeadTitle>
              <HeadIcons><Tri w={8} h={4} /><Pin /><Cross /></HeadIcons>
            </PanelHead>
            <ToolboxSearch>
              <SearchField><span>Search Toolbox</span><Magnifier /></SearchField>
              <SearchDrop><Tri color="#1e1e1e" w={6} h={3} /></SearchDrop>
            </ToolboxSearch>
            <ToolboxBody>
              <ToolboxList>
                <ToolboxGroup>
                  <Svg s={7} vb="0 0 7 7"><path d="M7 0v7H0z" fill="#1e1e1e" /></Svg>
                  <span>All Windows Forms</span>
                </ToolboxGroup>
                {toolboxItems.map(([label, icon]) => (
                  <ToolboxItem key={label}><Svg s={16}>{toolboxIcons[icon]}</Svg><span>{label}</span></ToolboxItem>
                ))}
              </ToolboxList>
              <Scrollbar top={6} thumb={85} />
            </ToolboxBody>
            <BottomTabs>
              <BottomTab $w={88}>Server Explorer</BottomTab>
              <BottomTab $w={52} $active>Toolbox</BottomTab>
            </BottomTabs>
          </ToolWindow>

          <ToolWindow $w={837} $ml={8}>
            <DocTabs>
              <DocTab>Form1.cs</DocTab>
              <ActiveDocTab>
                Form1.cs [Design]
                <DocTabIcons>
                  <Svg s={11} vb="0 0 11 11"><path d="M0 5.500h3M3.500 2.500v6M3.500 3.500h6v4h-6M3.500 6.500h6" fill="none" stroke="#6b4a10" /></Svg>
                  <Cross color="#6b4a10" />
                </DocTabIcons>
              </ActiveDocTab>
              <DocMenu>
                <Tri w={7} h={4} />
                <Svg s={11} vb="0 0 11 11"><circle cx="5.500" cy="5.500" r="2.800" fill="none" stroke="#d8deef" strokeWidth="2" /><path d="M5.500 0v2M5.500 9v2M0 5.500h2M9 5.500h2M1.600 1.600L3 3M8 8l1.400 1.400M9.400 1.600L8 3M3 8L1.600 9.400" stroke="#d8deef" strokeWidth="1.400" /></Svg>
              </DocMenu>
            </DocTabs>
            <Editor>
              <Canvas>
                <Selection>
                  <Handle $x={560} $y={241} />
                  <Handle $x={278} $y={487} />
                  <Handle $x={560} $y={487} />
                  <FormWindow>
                    <FormTitle>
                      <Svg s={13} vb="0 0 13 13">
                        <rect width="13" height="13" fill="#d8d8d8" opacity=".5" />
                        <rect x="5" y="1" width="7" height="6" fill="#f5c33b" stroke="#a87a10" strokeWidth=".7" />
                        <rect x="1" y="5" width="4" height="5" fill="#c8241a" stroke="#701010" strokeWidth=".7" />
                        <rect x="6" y="8" width="5" height="4" fill="#4a90d9" stroke="#2a5fa0" strokeWidth=".7" />
                      </Svg>
                      <FormName>Form1</FormName>
                      <CaptionButtons>
                        <CaptionButton><Svg w={11} h={5} vb="0 0 11 5"><rect x=".5" y=".5" width="10" height="4" fill="#e6e6e6" stroke="#444" /></Svg></CaptionButton>
                        <CaptionButton><Svg w={11} h={9} vb="0 0 11 9"><rect x=".5" y=".5" width="10" height="8" fill="#e6e6e6" stroke="#444" /><rect x="3" y="3.500" width="5" height="2" fill="#5a6a8a" /></Svg></CaptionButton>
                        <CaptionButton $close><Svg w={11} h={9} vb="0 0 11 9"><path d="M1.500 1l8 7M9.500 1l-8 7" stroke="#555" strokeWidth="3.200" /><path d="M1.500 1l8 7M9.500 1l-8 7" stroke="#fff" strokeWidth="2" /></Svg></CaptionButton>
                      </CaptionButtons>
                    </FormTitle>
                    <Client>
                      <Heading>Registration</Heading>
                      {fields.map((f) => (
                        <FieldRow key={f.label} $after={f.after}>
                          <FieldLabel $size={f.size} $lift={f.lift}>{f.label}</FieldLabel>
                          <FieldFrame $w={f.w} $h={f.h} $gapR={f.gapR} $gapV={f.gapV}><FieldInput /></FieldFrame>
                        </FieldRow>
                      ))}
                      <FormActions>
                        <FormButton $w={78} $h={24} $mt={10}><CloseLabel>close</CloseLabel></FormButton>
                        <FormButton $w={118} $h={43} $ml={154}><ConfirmLabel>confirm</ConfirmLabel></FormButton>
                      </FormActions>
                    </Client>
                  </FormWindow>
                </Selection>
              </Canvas>
              <Scrollbar top={4} thumb={480} bg="#f2f2f5" />
            </Editor>
            <Divider />
            <Tray>
              <Svg s={14} vb="0 0 16 16">{toolboxIcons.worker}</Svg>
              <span>backgroundWorker1</span>
            </Tray>
          </ToolWindow>

          <ToolWindow $w={300} $ml={8}>
            <PanelHead>
              <HeadTitle>Properties</HeadTitle>
              <HeadIcons><Tri w={8} h={4} /><Pin /><Cross /></HeadIcons>
            </PanelHead>
            <ObjectBar>
              <ObjectName>Form1</ObjectName>
              <ObjectType>System.Windows.Forms.Form</ObjectType>
              <Tri color="#1e1e1e" w={6} h={3} />
            </ObjectBar>
            <PropToolbar>
              <PropTool $on><Svg s={18} vb="0 0 18 18"><path d="M2 2h5v5H2zM2 10h5v5H2z" fill="none" stroke="#333" /><path d="M3.500 4.500h2M3.500 12.500h2M4.500 11.500v2M9 3h7M9 5h7M9 7h5M9 10h7M9 12h7M9 14h5" stroke="#333" /></Svg></PropTool>
              <PropTool>
                <Svg s={18} vb="0 0 18 18">
                  <text x="1" y="8" fontSize="8" fontWeight="bold" fontFamily="Liberation Sans" fill="#333">A</text>
                  <text x="1" y="16" fontSize="8" fontWeight="bold" fontFamily="Liberation Sans" fill="#333">Z</text>
                  <path d="M12.500 3v12M9.500 11.500l3 3.500 3-3.500" fill="none" stroke="#1b5faa" strokeWidth="1.800" />
                </Svg>
              </PropTool>
              <PropSep />
              <PropTool $on>
                <Svg s={18} vb="0 0 18 18">
                  <path d="M5 2.500h7l3.500 3.500v10H5z" fill="#f5f5f5" stroke="#333" />
                  <path d="M2.500 6.500c0-1.500 1-2.500 2-2.500v2h2V4c1 0 2 1 2 2.500 0 1-.6 1.800-1.300 2.200V14H3.800V8.700c-.7-.4-1.300-1.200-1.300-2.200z" fill="#333" />
                </Svg>
              </PropTool>
              <PropTool><Svg s={18} vb="0 0 18 18"><path d="M10 1h7l-4 6h3L5 17l3-8H5z" fill="#f0b429" stroke="#8a5a10" strokeWidth=".8" /></Svg></PropTool>
              <PropSep />
              <PropTool><Svg s={18} vb="0 0 18 18"><path d="M11 8L3 16" stroke="#9a9eac" strokeWidth="4" /><circle cx="12" cy="6" r="4.500" fill="#9a9eac" /><path d="M12 6l4-4" stroke="#ccd5f0" strokeWidth="2.500" /></Svg></PropTool>
            </PropToolbar>
            <PropBody>
              <PropGrid>
                {propGroups.map(([group, rows]) => (
                  <React.Fragment key={group}>
                    <CategoryRow><Box sign="-" /><span>{group}</span></CategoryRow>
                    {rows.map((r) => (
                      <PropRow key={r.n}>
                        {r.plus && <Expander><Box sign="+" /></Expander>}
                        <PropName>{r.n}</PropName>
                        <PropValue $bold={r.bold} $swatch={r.swatch}>
                          {r.swatch && <Swatch $c={r.swatch} />}
                          {r.v}
                        </PropValue>
                      </PropRow>
                    ))}
                  </React.Fragment>
                ))}
              </PropGrid>
              <Scrollbar top={5} thumb={156} w={17} />
            </PropBody>
            <DescPanel>
              <DescTitle>Text</DescTitle>
              <DescText>The text associated with the control.</DescText>
            </DescPanel>
          </ToolWindow>
        </Panels>
        <OutputRow><OutputTab>Output</OutputTab></OutputRow>
      </Workspace>

      <StatusBar>
        <Svg w={15} h={17} vb="0 0 15 17"><path d="M.5.5h14v12H9.500l-2 3-2-3h-5z" fill="none" stroke="#f0f3fb" /></Svg>
        <ReadyText>Ready</ReadyText>
        <StatusRight>
          <StatusItem>
            <Svg w={12} h={15} vb="0 0 12 15"><path d="M6 1l5 6H8.500v7h-5V7H1z" fill="#fff" stroke="#111" /></Svg>
            <span>Add to Source Control</span>
            <Tri color="#fff" w={8} h={4} down={false} />
          </StatusItem>
          <StatusItem $ml={20}>
            <Svg s={14} vb="0 0 14 14"><path d="M7 0l7 7-7 7-7-7z" fill="#fff" /><path d="M5 3.500l3 3v3M8 6.500l2 1.500" stroke="#40508d" fill="none" /></Svg>
            <span>Select Repository</span>
            <Tri color="#fff" w={8} h={4} down={false} />
          </StatusItem>
          <Bell>
            <Svg s={14} vb="0 0 14 14"><path d="M2 11c1-1 1-2 1-5s2-5 4-5 4 2 4 5 0 4 1 5zM6 11v2h2v-2" fill="none" stroke="#f0f3fb" /></Svg>
            <BellBadge>1</BellBadge>
          </Bell>
        </StatusRight>
      </StatusBar>

      <Taskbar>
        <TaskSlot $w={48}><Svg s={16} vb="0 0 16 16"><path d="M0 2.300L6.500 1.400V7.500H0zM7.300 1.300L16 0V7.500H7.300zM0 8.300H6.500V14.500L0 13.700zM7.300 8.300H16V16L7.300 14.700z" fill="#fff" /></Svg></TaskSlot>
        <TaskSlot $w={49}><Svg s={17} vb="0 0 17 17"><circle cx="10.500" cy="6.500" r="5.500" fill="none" stroke="#fff" strokeWidth="1.300" /><path d="M6.500 10.500L1 16" stroke="#fff" strokeWidth="1.500" /></Svg></TaskSlot>
        <TaskSlot $w={50}>
          <Svg s={26} vb="0 0 26 26">
            <circle cx="13" cy="13" r="12.500" fill="#1b8fd6" />
            <path d="M1 14C2 5 10 .5 14 .5c6 0 11 5 11 10.500 0 4-4 5-6.500 4 1-1 1.500-2.500.5-4-2-3-9-3-12 1C5 15 6 20 11 24 5 24 1 20 1 14z" fill="#2fc4b2" />
            <path d="M7 12c3-4 10-4 12-1 1 1.500.5 3-.5 4 2.500 1 6.500 0 6.500-4C25 17 20 25 13 25.500 8 25.500 5 18 7 12z" fill="#0c5ea8" />
          </Svg>
        </TaskSlot>
        <TaskSlot $w={49}>
          <Svg s={24} vb="0 0 24 24">
            <circle cx="12" cy="12" r="11.500" fill="#db4437" />
            <path d="M12 12L2 18A11.500 11.500 0 0 1 3 5z" fill="#0f9d58" />
            <path d="M12 12L12 23.500A11.500 11.500 0 0 0 23 8H12z" fill="#fbbc05" />
            <path d="M12 23.500A11.500 11.500 0 0 1 2 18L8 9z" fill="#0f9d58" />
            <circle cx="12" cy="12" r="5.500" fill="#fff" /><circle cx="12" cy="12" r="4.300" fill="#4285f4" />
          </Svg>
        </TaskSlot>
        <TaskSlot $w={49} $running>
          <Svg w={22} h={22} vb="0 0 22 22">
            <path d="M0 1h8l2 3h12v16H0z" fill="#e0a93a" /><path d="M0 6h22v14H0z" fill="#f7d774" />
            <path d="M6 13h10v7H6z" fill="#2d8fd6" /><path d="M9 16h4v4H9z" fill="#f7d774" />
          </Svg>
        </TaskSlot>
        <TaskSlot $w={49}>
          <Svg s={24} vb="0 0 24 24">
            <path d="M8 2a2 2 0 0 1 2-2h12a2 2 0 0 1 2 2v13a2 2 0 0 1-2 2h-5v-4h3V4h-8v3H8z" fill="#1b8cd8" />
            <path d="M0 9a2 2 0 0 1 2-2h13a2 2 0 0 1 2 2v13a2 2 0 0 1-2 2H2a2 2 0 0 1-2-2zM4 11v9h9v-9z" fill="#ef8a0c" />
            <path d="M8 8h9v9H8zM11 11v3h3v-3z" fill="#fff" opacity=".2" />
          </Svg>
        </TaskSlot>
        <TaskSlot $w={49}>
          <Svg s={26} vb="0 0 26 26">
            <path d="M3 2h17v24H3z" fill="#f1f1e6" /><path d="M3 18h17v8H3z" fill="#7cc14a" />
            <path d="M5 4h13" stroke="#555" strokeDasharray="1 1" />
            <path d="M8 9v9M11 9v9" stroke="#444" strokeWidth="1.500" /><path d="M13 12h4M13 14h3" stroke="#555" />
            <path d="M15 15L24 2l1.500 1-9 13z" fill="#e8b83a" />
          </Svg>
        </TaskSlot>
        <TaskSlot $w={49}>
          <Svg s={22} vb="0 0 22 22">
            <rect width="22" height="22" fill="#c8e021" /><rect x="2.500" y="2.500" width="17" height="17" fill="#0d0d0d" />
            <text x="4" y="11" fontSize="8" fontWeight="bold" fontFamily="Liberation Sans" fill="#fff">PC</text>
            <path d="M4 16h7" stroke="#fff" strokeWidth="1.300" />
          </Svg>
        </TaskSlot>
        <TaskSlot $w={49}>
          <Svg s={24} vb="0 0 24 24">
            <rect width="24" height="24" rx="1" fill="#1a2b63" /><path d="M1 12h22v11H1z" fill="#0a1a4a" />
            <text x="12" y="10" fontSize="8" fontWeight="bold" textAnchor="middle" fontFamily="Liberation Sans" fill="#e8eef8">DEV</text>
            <text x="12" y="20" fontSize="8" fontWeight="bold" textAnchor="middle" fontFamily="Liberation Sans" fill="#2a80e0">C++</text>
          </Svg>
        </TaskSlot>
        <TaskSlot $w={49}>
          <Svg s={26} vb="0 0 26 26">
            <path d="M1 9L13 1l12 8v16H1z" fill="#0a6cbd" /><path d="M1 11h24v14H1z" fill="#28a8ea" />
            <path d="M3 9h20l-10 8z" fill="#fff" />
          </Svg>
          <MailBadge>6</MailBadge>
        </TaskSlot>
        <TaskSlot $w={47} $active $running>
          <Svg s={24} vb="0 0 24 24">
            <path d="M1 7l5-3 11 14-5 4z" fill="#8a62cf" /><path d="M1 7v10l3 2V9z" fill="#5c2d91" />
            <path d="M17 2l6 3v14l-6 3z" fill="#b794e6" /><path d="M6 18l-2 1 3-8z" fill="#5c2d91" />
          </Svg>
        </TaskSlot>
        <SystemTray>
          <TrayIcon $w={24}><Svg w={12} h={7} vb="0 0 12 7"><path d="M.5 6.500L6 1l5.500 5.500" fill="none" stroke="#f2f4f6" /></Svg></TrayIcon>
          <TrayIcon $w={24}><Svg w={15} h={9} vb="0 0 15 9"><path d="M.5.5h12v8H.5zM13 3h1.500v3H13z" fill="none" stroke="#f2f4f6" /><path d="M2 2h5v5H2z" fill="#f2f4f6" /></Svg></TrayIcon>
          <TrayIcon $w={24}><Svg s={14} vb="0 0 14 14"><path d="M1 13C1 6 6 1 13 1M4 13c0-5 4-9 9-9M7 13c0-3 3-6 6-6" fill="none" stroke="#cfd6dc" /><circle cx="11.500" cy="11.500" r="1.500" fill="#f2f4f6" /></Svg></TrayIcon>
          <TrayIcon $w={24}><Svg s={15} vb="0 0 15 15"><path d="M1 5.500h3L8 2v11L4 9.500H1z" fill="none" stroke="#f2f4f6" /><path d="M10 5c1 1.500 1 3.500 0 5M12 3c2 2.500 2 6.500 0 9" fill="none" stroke="#f2f4f6" /></Svg></TrayIcon>
          <TrayIcon $w={29}>ENG</TrayIcon>
          <Clock>3:22 PM<br />3/31/2022</Clock>
          <Notify><Svg w={16} h={16} vb="0 0 16 16"><path d="M.5 1.500h15v11H10l-2 2.500-2-2.500H.5z" fill="none" stroke="#f2f4f6" /></Svg></Notify>
          <ShowDesktop />
        </SystemTray>
      </Taskbar>
    </Shell>
  );
}
